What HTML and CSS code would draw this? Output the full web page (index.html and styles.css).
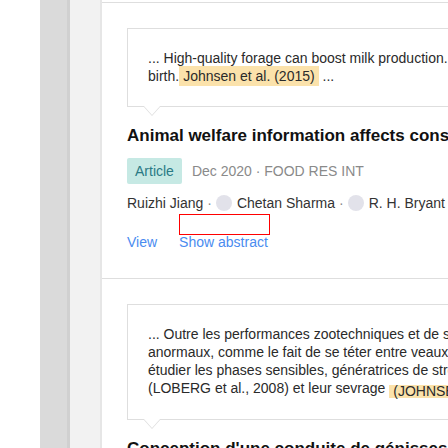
FILE: index.html
```html
<!DOCTYPE html>
<html>
<head>
<meta charset="utf-8">
<link rel="stylesheet" href="styles.css">
</head>
<body>
<div class="page">
  <div class="gutter"></div>
  <div class="rail"></div>
  <div class="rail2"></div>
  <main class="main">
    <div class="prev"></div>
    <section class="item">
      <div class="quote">
        <p class="quote-text">... High-quality forage can boost milk production.<br>birth.<span class="hl">Johnsen et al. (2015)</span> ...</p>
      </div>
      <h2 class="title">Animal welfare information affects consumers' willingness to pay</h2>
      <div class="meta">
        <span class="badge">Article</span>
        <span class="meta-text">Dec 2020 · FOOD RES INT</span>
      </div>
      <div class="authors">
        <span class="author">Ruizhi Jiang</span>
        <span class="sep">·</span>
        <span class="avatar"></span>
        <span class="author">Chetan Sharma</span>
        <span class="sep">·</span>
        <span class="avatar"></span>
        <span class="author">R. H. Bryant</span>
      </div>
      <div class="marker"></div>
      <div class="links">
        <a class="link">View</a>
        <a class="link">Show abstract</a>
      </div>
    </section>
    <section class="item">
      <div class="quote">
        <p class="quote-text">... Outre les performances zootechniques et de santé<br>anormaux, comme le fait de se téter entre veaux<br>étudier les phases sensibles, génératrices de stress<br>(LOBERG et al., 2008) et leur sevrage <span class="hl-box">(JOHNSEN et al., 2015)</span></p>
      </div>
      <h2 class="title">Conception d'une conduite de génisses laitières</h2>
    </section>
  </main>
</div>
</body>
</html>
```

FILE: styles.css
```css
* { box-sizing: border-box; }
html, body {
  margin: 0;
  padding: 0;
  background: #ffffff;
  overflow: hidden;
  font-family: "Liberation Sans", Arial, sans-serif;
}
.page {
  display: flex;
  width: 900px;
  height: 448px;
  overflow: hidden;
}
.gutter {
  width: 40px;
  flex: none;
  background: #ffffff;
}
.rail {
  width: 30px;
  flex: none;
  background: #dadada;
  border-right: 3px solid #d0d0d0;
}
.rail2 {
  width: 32px;
  flex: none;
  background: #f2f2f2;
  border-right: 2px solid #e6e6e6;
}
.main {
  flex: 1;
  background: #ffffff;
}
.prev {
  height: 3px;
  border-bottom: 1px solid #dedede;
}
.item {
  position: relative;
  padding: 25px 0 27px 25px;
  border-bottom: 1px solid #dedede;
}
.quote {
  position: relative;
  border: 1px solid #dedede;
  padding: 20px 20px 21px;
  background: #ffffff;
}
.quote::before,
.quote::after {
  content: "";
  position: absolute;
  width: 0;
  height: 0;
  border-style: solid;
  border-color: transparent;
}
.quote::before {
  left: 15px;
  bottom: -10px;
  border-width: 10px 9px 0 9px;
  border-top-color: #dedede;
}
.quote::after {
  left: 16px;
  bottom: -9px;
  border-width: 9px 8px 0 8px;
  border-top-color: #ffffff;
}
.quote-text {
  margin: 0;
  font-size: 14px;
  line-height: 18px;
  color: #2a2a2a;
  white-space: nowrap;
}
.hl {
  background: #fbe2ab;
  padding: 2px 4px;
}
.hl-box {
  display: inline-block;
  height: 13px;
  line-height: 13px;
  padding: 0 4px;
  background: #fbe2ab;
  vertical-align: -3px;
}
.title {
  margin: 18px 0 0;
  font-size: 17px;
  line-height: 22px;
  font-weight: bold;
  color: #111111;
  white-space: nowrap;
}
.meta {
  display: flex;
  align-items: center;
  gap: 10px;
  margin-top: 11px;
}
.badge {
  display: inline-block;
  height: 26px;
  line-height: 26px;
  padding: 0 8px;
  background: #c6e9e4;
  color: #2a7a84;
  font-size: 14px;
  border-radius: 2px;
}
.meta-text {
  font-size: 14px;
  color: #8a8a8a;
  white-space: nowrap;
}
.authors {
  display: flex;
  align-items: center;
  margin-top: 10px;
  height: 18px;
  font-size: 14px;
  color: #333333;
  white-space: nowrap;
}
.sep {
  color: #888888;
  margin: 0 4px 0 4px;
}
.avatar {
  flex: none;
  width: 16px;
  height: 16px;
  border-radius: 50%;
  background: #e2e2ea;
  margin-right: 5px;
}
.marker {
  position: absolute;
  left: 77px;
  top: 211px;
  width: 91px;
  height: 21px;
  border: 1px solid #ff0000;
}
.links {
  display: flex;
  gap: 22px;
  margin-top: 21px;
  font-size: 14px;
  line-height: 18px;
}
.link {
  color: #4a8cf0;
  cursor: pointer;
}
```
